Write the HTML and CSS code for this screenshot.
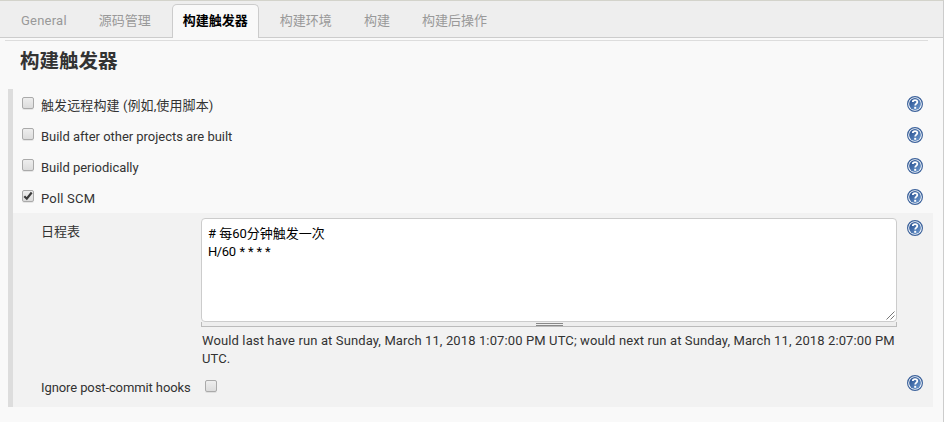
FILE: index.html
```html
<!DOCTYPE html>
<html lang="zh-CN">
<head>
<meta charset="utf-8">
<title>构建触发器</title>
<link rel="stylesheet" href="styles.css">
</head>
<body>
<svg class="defs" aria-hidden="true">
  <defs>
    <linearGradient id="blue" x1="0" y1="0" x2="1" y2="1">
      <stop offset="0" stop-color="#234b8c"/><stop offset="1" stop-color="#6f9bd0"/>
    </linearGradient>
    <symbol id="help" viewBox="0 0 16 16">
      <circle cx="8" cy="8" r="7.4" fill="#fff" stroke="#3c629b" stroke-width="1.2"/>
      <circle cx="8" cy="8" r="5.9" fill="url(#blue)"/>
      <path d="M5.8 6.1C5.8 3.5 10.3 3.5 10.3 6C10.3 7.6 8.2 7.6 8.2 9.5" fill="none" stroke="#fff" stroke-width="1.8"/>
      <path d="M7.2 10.8h2v2h-2z" fill="#fff"/>
    </symbol>
  </defs>
</svg>
<main class="page">
  <nav class="tabs">
    <a class="tab latin">General</a>
    <a class="tab">源码管理</a>
    <a class="tab active">构建触发器</a>
    <a class="tab">构建环境</a>
    <a class="tab">构建</a>
    <a class="tab">构建后操作</a>
  </nav>
  <div class="rule"></div>
  <h1 class="title">构建触发器</h1>
  <section class="triggers">
    <div class="row"><input class="check" type="checkbox"><label class="label wide">触发远程构建 (例如,使用脚本)</label><svg class="help"><use href="#help"/></svg></div>
    <div class="row"><input class="check" type="checkbox"><label class="label">Build after other projects are built</label><svg class="help"><use href="#help"/></svg></div>
    <div class="row"><input class="check" type="checkbox"><label class="label">Build periodically</label><svg class="help"><use href="#help"/></svg></div>
    <div class="row"><span class="check"><svg class="tick" viewBox="0 0 12 12"><path d="M2.3 6.2L4.8 8.7L9.7 2.5" fill="none" stroke="#3b3b3b" stroke-width="2.2"/></svg></span><label class="label caps">Poll SCM</label><svg class="help"><use href="#help"/></svg></div>
    <div class="panel">
      <div class="field">
        <label class="name">日程表</label>
        <div class="value">
          <div class="editor"># 每60分钟触发一次<br><span class="cron">H/60 <span class="stars">* * * *</span></span><svg class="grip" viewBox="0 0 9 9"><path d="M.5 8.5l8-8M4.5 8.5l4-4" fill="none" stroke="#777"/></svg></div>
          <div class="handle"><span class="bars"></span></div>
          <p class="note">Would last have run at Sunday, March 11, 2018 1:07:00 PM UTC; would next run at Sunday, March 11, 2018 2:07:00 PM<br>UTC.</p>
        </div>
        <svg class="help"><use href="#help"/></svg>
      </div>
      <div class="field hooks">
        <label class="name">Ignore post-commit hooks</label>
        <div class="value"><input class="check" type="checkbox"></div>
        <svg class="help"><use href="#help"/></svg>
      </div>
    </div>
  </section>
</main>
</body>
</html>
```

FILE: styles.css
```css
* { box-sizing: border-box; }
body {
  margin: 0;
  background: #f9f9f9;
  color: #333;
  font: 13px/18px Roboto, "Noto Sans CJK SC", sans-serif;
}
.defs { position: absolute; width: 0; height: 0; }
.page {
  height: 422px;
  overflow: hidden;
  border-top: 1px solid #d3d3cb;
  border-right: 1px solid #ccc;
}
.tabs {
  display: flex;
  gap: 10px;
  height: 37px;
  padding: 3px 0 0 10px;
  background: #eee;
  border-bottom: 1px solid #ccc;
}
.tab {
  height: 34px;
  padding: 7px 10px 0;
  border: 1px solid transparent;
  border-bottom: 0;
  border-radius: 5px 5px 0 0;
  color: #999;
  white-space: nowrap;
}
.tab.latin { letter-spacing: .23px; }
.tab.active {
  background: #f9f9f9;
  border-color: #ccc;
  color: #000;
  font-weight: 700;
}
.rule { height: 1px; margin: 2px 15px 0 5px; background: #ddd; }
.title {
  margin: 7px 0 0 20px;
  height: 41px;
  font-size: 19.5px;
  line-height: 27px;
  font-weight: 700;
}
.triggers {
  width: 925px;
  height: 318px;
  margin-left: 8px;
  border-left: 5px solid #ddd;
}
.row { display: flex; height: 31px; padding: 7px 10px 0 9px; }
.label { flex: 1; margin: 1px 0 0 7px; letter-spacing: -.03px; }
.label.wide { letter-spacing: .1px; }
.label.caps { letter-spacing: .2px; }
.help { display: block; flex: none; width: 16px; height: 16px; }
.check {
  appearance: none;
  flex: none;
  width: 12px;
  height: 12px;
  margin: 1px 0 0;
  border: 1px solid #aaa;
  border-radius: 2px;
  background: linear-gradient(#eee, #dcdcdc);
  box-shadow: 0 1px 0 rgba(0, 0, 0, .08);
}
.tick { display: block; width: 12px; height: 12px; margin: -1px; }
.panel { height: 194px; background: #f2f2f2; }
.field { display: flex; padding: 5px 10px 0 28px; }
.name { flex: none; width: 160px; padding-top: 5px; }
.value { flex: none; width: 696px; margin-right: 10px; }
.field > .help { margin-top: 2px; }
.editor {
  position: relative;
  height: 104px;
  padding: 6px 6px 0;
  border: 1px solid #ccc;
  border-radius: 4px;
  background: #fff;
  color: #000;
}
.cron { letter-spacing: -.4px; }
.stars { margin-left: 1px; letter-spacing: -.15px; }
.grip { position: absolute; right: 1px; bottom: 1px; width: 9px; height: 9px; }
.handle {
  display: flex;
  justify-content: center;
  height: 5px;
  border: 1px solid #bbb;
  border-top: 0;
  background: #eee;
}
.bars { width: 27px; height: 3px; margin-top: 1px; border: solid #888; border-width: 1px 0; }
.note { margin: 5px 0 0 1px; white-space: nowrap; letter-spacing: .12px; }
.hooks { padding-top: 6px; }
.hooks .name { padding-top: 5px; letter-spacing: -.1px; }
.hooks .value { padding-left: 4px; padding-top: 5px; }
.hooks .check { display: block; }
.hooks > .help { margin-top: 1px; }
```
